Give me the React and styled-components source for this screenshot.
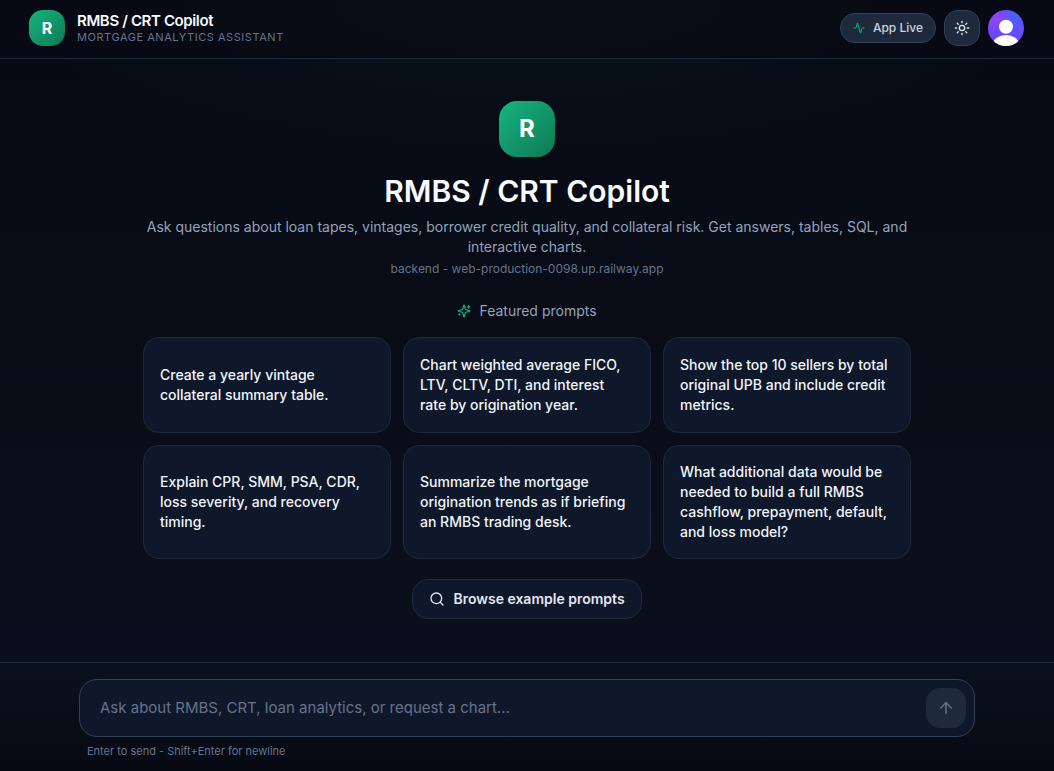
import { useState } from "react";
import styled, { createGlobalStyle } from "styled-components";
import { Activity, ArrowUp, Search, Sun } from "lucide-react";

const colors = {
  panel: "#0f172a",
  raised: "#1e293b",
  border: "#334155",
  line: "#1e293b",
  faint: "#64748b",
  muted: "#94a3b8",
  soft: "#cbd5e1",
  text: "#f8fafc",
  accent: "#10b981",
};

const prompts = [
  "Create a yearly vintage collateral summary table.",
  "Chart weighted average FICO, LTV, CLTV, DTI, and interest rate by origination year.",
  "Show the top 10 sellers by total original UPB and include credit metrics.",
  "Explain CPR, SMM, PSA, CDR, loss severity, and recovery timing.",
  "Summarize the mortgage origination trends as if briefing an RMBS trading desk.",
  "What additional data would be needed to build a full RMBS cashflow, prepayment, default, and loss model?",
];

const GlobalStyle = createGlobalStyle`
  * {
    box-sizing: border-box;
  }

  body {
    margin: 0;
    background: #070a13;
    color: ${colors.text};
    font-family: Inter, "Liberation Sans", sans-serif;
  }

  button,
  textarea {
    font-family: inherit;
  }

  button {
    cursor: pointer;
  }
`;

const Page = styled.div`
  display: flex;
  flex-direction: column;
  min-height: 100vh;
  background:
    radial-gradient(ellipse 50% 20% at 50% 0%, rgba(16, 185, 129, 0.06), transparent),
    linear-gradient(180deg, #070a14 0%, #080c17 40%, #0a111e 100%);
`;

const Header = styled.header`
  display: flex;
  align-items: center;
  justify-content: space-between;
  padding: 10px 30px 12px 29px;
  border-bottom: 1px solid ${colors.line};
  background: rgba(7, 10, 20, 0.7);
`;

const Brand = styled.div`
  display: flex;
  align-items: center;
  gap: 12px;
`;

const Logo = styled.div`
  display: flex;
  align-items: center;
  justify-content: center;
  width: ${({ $large }) => ($large ? "56px" : "36px")};
  height: ${({ $large }) => ($large ? "56px" : "36px")};
  border-radius: ${({ $large }) => ($large ? "18px" : "14px")};
  background: linear-gradient(135deg, #17b581, #0e7854);
  color: #ffffff;
  font-size: ${({ $large }) => ($large ? "24px" : "16px")};
  line-height: ${({ $large }) => ($large ? "32px" : "24px")};
  font-weight: 700;
`;

const BrandName = styled.div`
  font-size: 15px;
  line-height: 18px;
  font-weight: 600;
  letter-spacing: -0.025em;
`;

const BrandTagline = styled.div`
  color: ${colors.faint};
  font-size: 11px;
  line-height: 14px;
  letter-spacing: 0.05em;
  text-transform: uppercase;
`;

const HeaderActions = styled.div`
  display: flex;
  align-items: center;
  gap: 8px;
`;

const StatusPill = styled.div`
  display: flex;
  align-items: center;
  gap: 8px;
  height: 30px;
  padding: 0 12px;
  border: 1px solid ${colors.border};
  border-radius: 15px;
  background: ${colors.raised};
  color: ${colors.soft};
  font-size: 12px;
  line-height: 16px;
  font-weight: 500;

  svg {
    color: ${colors.accent};
  }
`;

const ThemeButton = styled.button`
  display: flex;
  align-items: center;
  justify-content: center;
  width: 36px;
  height: 36px;
  padding: 0;
  border: 1px solid ${colors.border};
  border-radius: 14px;
  background: ${colors.raised};
  color: #e2e8f0;
`;

const AvatarButton = styled.button`
  width: 36px;
  height: 36px;
  padding: 0;
  overflow: hidden;
  border: none;
  border-radius: 50%;
  background:
    radial-gradient(circle at 22% 24%, #9a45f0, transparent 36%),
    radial-gradient(circle at 78% 18%, #4a62ff, transparent 50%),
    #6c47ff;

  svg {
    display: block;
  }
`;

const Main = styled.main`
  display: flex;
  flex: 1;
  flex-direction: column;
  align-items: center;
  justify-content: center;
  width: 100%;
  max-width: 800px;
  margin: 0 auto;
  padding: 42px 16px 43px;
`;

const Title = styled.h1`
  margin: 16px 0 8px;
  font-size: 30px;
  line-height: 36px;
  font-weight: 600;
  text-align: center;
`;

const Subtitle = styled.p`
  margin: 0;
  color: ${colors.muted};
  font-size: 14px;
  line-height: 20px;
  text-align: center;
`;

const Backend = styled.p`
  margin: 4px 0 0;
  color: ${colors.faint};
  font-size: 12px;
  line-height: 16px;
`;

const FeaturedHeading = styled.h2`
  display: flex;
  align-items: center;
  gap: 8px;
  margin: 24px 0 16px;
  color: ${colors.muted};
  font-size: 14px;
  line-height: 20px;
  font-weight: 400;

  svg {
    color: ${colors.accent};
  }
`;

const PromptGrid = styled.div`
  display: grid;
  grid-template-columns: repeat(3, minmax(0, 1fr));
  gap: 12px;
  width: 100%;

  @media (max-width: 700px) {
    grid-template-columns: 1fr;
  }
`;

const PromptCard = styled.button`
  min-height: 96px;
  padding: 16px;
  border: 1px solid ${colors.line};
  border-radius: 16px;
  background: ${colors.panel};
  color: #f1f5f9;
  font-size: 14px;
  line-height: 20px;
  font-weight: 500;
  text-align: left;

  &:hover {
    border-color: ${colors.border};
  }
`;

const BrowseButton = styled.button`
  display: flex;
  align-items: center;
  gap: 8px;
  height: 40px;
  margin-top: 20px;
  padding: 0 16px;
  border: 1px solid ${colors.line};
  border-radius: 16px;
  background: ${colors.panel};
  color: #e2e8f0;
  font-size: 14px;
  line-height: 20px;
  font-weight: 600;
`;

const Footer = styled.footer`
  padding: 16px 16px 12px;
  border-top: 1px solid ${colors.line};
  background: linear-gradient(180deg, #0a111e, #070a13);
`;

const ComposerForm = styled.form`
  max-width: 896px;
  margin: 0 auto;
`;

const ComposerBox = styled.div`
  display: flex;
  align-items: center;
  gap: 8px;
  height: 58px;
  padding: 0 8px 0 20px;
  border: 1px solid ${colors.border};
  border-radius: 18px;
  background: ${colors.panel};
`;

const ComposerInput = styled.textarea`
  flex: 1;
  height: 24px;
  padding: 0;
  border: none;
  outline: none;
  resize: none;
  background: transparent;
  color: ${colors.text};
  font-size: 15px;
  line-height: 24px;

  &::placeholder {
    color: ${colors.faint};
  }
`;

const SendButton = styled.button`
  display: flex;
  align-items: center;
  justify-content: center;
  width: 40px;
  height: 40px;
  padding: 0;
  border: none;
  border-radius: 14px;
  background: ${colors.raised};
  color: ${colors.faint};
`;

const Hint = styled.p`
  margin: 6px 0 0;
  padding: 0 8px;
  color: ${colors.faint};
  font-size: 11px;
  line-height: 16px;
`;

function SparklesIcon() {
  return (
    <svg
      width="14"
      height="14"
      viewBox="0 0 24 24"
      fill="none"
      stroke="currentColor"
      strokeWidth="2"
      strokeLinecap="round"
      strokeLinejoin="round"
      aria-hidden="true"
    >
      <path d="M9.937 15.5A2 2 0 0 0 8.5 14.063l-6.135-1.582a.5.5 0 0 1 0-.962L8.5 9.936A2 2 0 0 0 9.937 8.5l1.582-6.135a.5.5 0 0 1 .963 0L14.063 8.5A2 2 0 0 0 15.5 9.937l6.135 1.581a.5.5 0 0 1 0 .964L15.5 14.063a2 2 0 0 0-1.437 1.437l-1.582 6.135a.5.5 0 0 1-.963 0z" />
      <path d="M20 3v4M22 5h-4M4 17v2M5 18H3" />
    </svg>
  );
}

function TopBar() {
  return (
    <Header>
      <Brand>
        <Logo>R</Logo>
        <div>
          <BrandName>RMBS / CRT Copilot</BrandName>
          <BrandTagline>Mortgage Analytics Assistant</BrandTagline>
        </div>
      </Brand>
      <HeaderActions>
        <StatusPill>
          <Activity size={12} />
          App Live
        </StatusPill>
        <ThemeButton type="button" aria-label="Toggle theme">
          <Sun size={16} />
        </ThemeButton>
        <AvatarButton type="button" aria-label="Open user menu">
          <svg width="36" height="36" viewBox="0 0 36 36" fill="#ffffff">
            <circle cx="18" cy="16.7" r="7" />
            <ellipse cx="18" cy="34" rx="13" ry="9" />
          </svg>
        </AvatarButton>
      </HeaderActions>
    </Header>
  );
}

function Composer({ value, onChange }) {
  return (
    <Footer>
      <ComposerForm onSubmit={(e) => e.preventDefault()}>
        <ComposerBox>
          <ComposerInput
            rows={1}
            aria-label="Message"
            placeholder="Ask about RMBS, CRT, loan analytics, or request a chart..."
            value={value}
            onChange={(e) => onChange(e.target.value)}
          />
          <SendButton type="submit" aria-label="Send">
            <ArrowUp size={18} />
          </SendButton>
        </ComposerBox>
        <Hint>Enter to send - Shift+Enter for newline</Hint>
      </ComposerForm>
    </Footer>
  );
}

function App() {
  const [message, setMessage] = useState("");

  return (
    <Page>
      <GlobalStyle />
      <TopBar />
      <Main>
        <Logo $large>R</Logo>
        <Title>RMBS / CRT Copilot</Title>
        <Subtitle>
          Ask questions about loan tapes, vintages, borrower credit quality, and
          collateral risk. Get answers, tables, SQL, and interactive charts.
        </Subtitle>
        <Backend>backend - web-production-0098.up.railway.app</Backend>
        <FeaturedHeading>
          <SparklesIcon />
          Featured prompts
        </FeaturedHeading>
        <PromptGrid>
          {prompts.map((prompt) => (
            <PromptCard key={prompt} type="button" onClick={() => setMessage(prompt)}>
              {prompt}
            </PromptCard>
          ))}
        </PromptGrid>
        <BrowseButton type="button">
          <Search size={16} />
          Browse example prompts
        </BrowseButton>
      </Main>
      <Composer value={message} onChange={setMessage} />
    </Page>
  );
}

export default App;
